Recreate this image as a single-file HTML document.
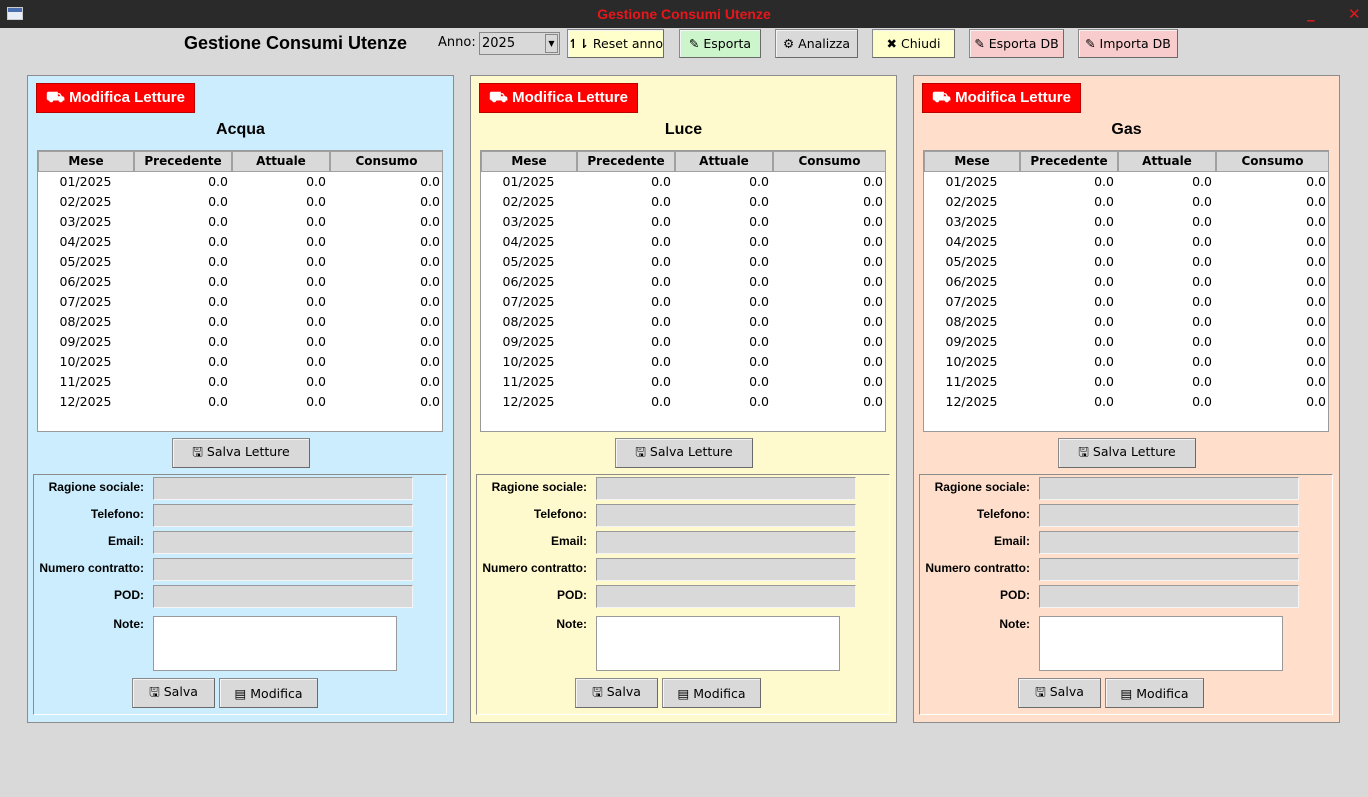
<!DOCTYPE html>
<html><head><meta charset="utf-8"><style>
*{box-sizing:border-box;margin:0;padding:0}
body{width:1368px;height:797px;background:#d9d9d9;position:relative;overflow:hidden;font-family:"DejaVu Sans","Liberation Sans",sans-serif;font-size:13px;color:#000}
.abs{position:absolute}
#tb{left:0;top:0;width:1368px;height:28px;background:#2a2a2a}
#tb .t{left:0;width:1368px;top:6px;text-align:center;color:#e8161a;font-family:"Liberation Sans",sans-serif;font-weight:bold;font-size:14px}
.btn{position:absolute;border:1px solid #8a8a8a;border-right-color:#6a6a6a;border-bottom-color:#6a6a6a;background:#d9d9d9;display:flex;align-items:center;justify-content:center;font-size:12.5px;white-space:nowrap;box-shadow:inset 1px 1px 0 #f4f4f4}
.panel{position:absolute;top:75px;width:427px;height:648px;border:1px solid #8c8c8c}
.red{left:8px;top:7px;width:159px;height:30px;background:#f00;color:#fff;font-family:"Liberation Sans",sans-serif;font-weight:bold;font-size:15px;display:flex;align-items:center;justify-content:center;border:1px solid #b00}
.ttl{left:0;width:425px;top:45px;text-align:center;font-family:"Liberation Sans",sans-serif;font-weight:bold;font-size:16px}
.tbl{left:9px;top:74px;width:406px;height:282px;background:#fff;border:1px solid #9a9a9a}
.hd{position:absolute;top:0;height:21px;background:#d9d9d9;border:1px solid #a0a0a0;font-weight:bold;font-size:12px;text-align:center;line-height:19px}
.row{position:absolute;left:0;width:404px;height:20px;font-size:12.5px;line-height:20px}
.row span{position:absolute}
.c1{left:0;width:95px;text-align:center}
.c2{left:96px;width:94px;text-align:right}
.c3{left:194px;width:94px;text-align:right}
.c4{left:292px;width:110px;text-align:right}
.frame{left:5px;top:398px;width:414px;height:241px;border:1px solid #8c8c8c;border-right-color:#fff;border-bottom-color:#fff}
.lb{position:absolute;right:302px;font-family:"Liberation Sans",sans-serif;font-weight:bold;font-size:12px;text-align:right;white-space:nowrap}
.in{position:absolute;left:119px;width:260px;height:23px;background:#d9d9d9;border:1px solid #999;border-right-color:#f5f5f5;border-bottom-color:#f5f5f5}
.ta{position:absolute;left:119px;top:141px;width:244px;height:55px;background:#fff;border:1px solid #999}
</style></head><body>
<div id="tb" class="abs">
 <div class="abs" style="left:7px;top:7px;width:16px;height:13px;background:linear-gradient(#4a6fb0 0 4px,#e8eef8 4px);border:1px solid #ccc"></div>
 <div class="abs t">Gestione Consumi Utenze</div>
 <div class="abs" style="left:1307px;top:4px;color:#e8161a;font-size:15px;font-weight:bold">_</div>
 <div class="abs" style="left:1348px;top:5px;color:#e8161a;font-size:15px;font-weight:bold">✕</div>
</div>
<div class="abs" style="left:184px;top:33px;font-family:'Liberation Sans',sans-serif;font-weight:bold;font-size:18px">Gestione Consumi Utenze</div>
<div class="abs" style="left:438px;top:35px;font-size:13px">Anno:</div>
<div class="abs" style="left:479px;top:32px;width:81px;height:23px;background:#d9d9d9;border:1px solid #888"><span class="abs" style="left:2px;top:3px;font-size:13px">2025</span><div class="abs" style="right:1px;top:1px;width:13px;height:19px;border:1px solid #888;background:#d9d9d9;font-size:8px;text-align:center;line-height:18px">▼</div></div>
<div class="btn" style="left:567px;top:29px;width:97px;height:29px;background:#ffffcc"><b>↿⇂</b>&nbsp;Reset anno</div>
<div class="btn" style="left:679px;top:29px;width:82px;height:29px;background:#ccf5cc">✎ Esporta</div>
<div class="btn" style="left:775px;top:29px;width:83px;height:29px">⚙ Analizza</div>
<div class="btn" style="left:872px;top:29px;width:83px;height:29px;background:#ffffcc">✖ Chiudi</div>
<div class="btn" style="left:969px;top:29px;width:95px;height:29px;background:#f8cccc">✎ Esporta DB</div>
<div class="btn" style="left:1078px;top:29px;width:100px;height:29px;background:#f8cccc">✎ Importa DB</div>

<div class="panel" style="left:27px;background:#cbedfd" id="p1"></div>
<div class="panel" style="left:470px;background:#fffacd" id="p2"></div>
<div class="panel" style="left:913px;background:#ffdfcb" id="p3"></div>

<script>
var names=["Acqua","Luce","Gas"];
for(var i=0;i<3;i++){
 var h='<div class="abs red">⛟&nbsp;Modifica Letture</div><div class="abs ttl">'+names[i]+'</div><div class="abs tbl">'+
 '<div class="hd" style="left:0;width:96px">Mese</div><div class="hd" style="left:96px;width:98px">Precedente</div><div class="hd" style="left:194px;width:98px">Attuale</div><div class="hd" style="left:292px;width:113px">Consumo</div>';
 for(var r=0;r<12;r++){var m=(r<9?'0':'')+(r+1);h+='<div class="row" style="top:'+(21+r*20)+'px"><span class="c1">'+m+'/2025</span><span class="c2">0.0</span><span class="c3">0.0</span><span class="c4">0.0</span></div>';}
 h+='</div><div class="btn" style="left:144px;top:362px;width:138px;height:30px">🖫 Salva Letture</div><div class="abs frame">';
 var L=["Ragione sociale:","Telefono:","Email:","Numero contratto:","POD:"];
 for(var k=0;k<5;k++){h+='<div class="lb" style="top:'+(5+k*27)+'px">'+L[k]+'</div><div class="in" style="top:'+(2+k*27)+'px"></div>';}
 h+='<div class="lb" style="top:142px">Note:</div><div class="ta"></div><div class="btn" style="left:98px;top:203px;width:83px;height:30px">🖫 Salva</div><div class="btn" style="left:185px;top:203px;width:99px;height:30px">▤ Modifica</div></div>';
 document.getElementById('p'+(i+1)).innerHTML=h;
}
</script>
</body></html>
